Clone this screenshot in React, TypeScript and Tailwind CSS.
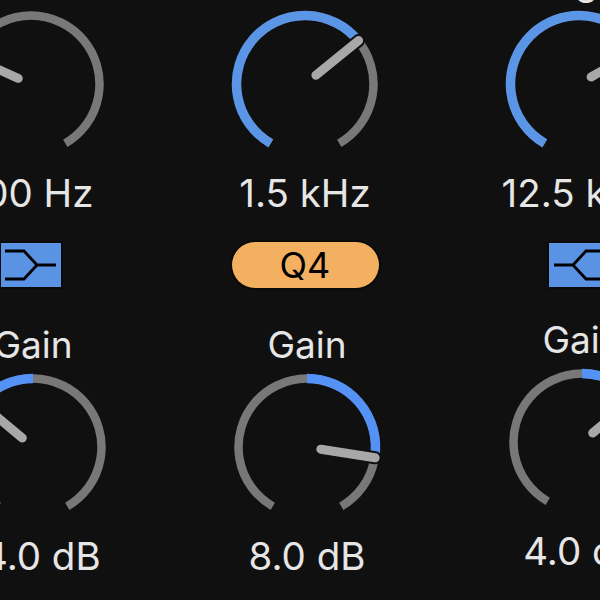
const START = -150;
const END = 150;

function polar(cx: number, cy: number, r: number, deg: number) {
  const rad = (deg * Math.PI) / 180;
  return [cx + r * Math.sin(rad), cy - r * Math.cos(rad)];
}

function arc(r: number, from: number, to: number) {
  const [x1, y1] = polar(80, 80, r, from);
  const [x2, y2] = polar(80, 80, r, to);
  const large = to - from > 180 ? 1 : 0;
  return `M ${x1} ${y1} A ${r} ${r} 0 ${large} 1 ${x2} ${y2}`;
}

interface KnobProps {
  angle: number;
  origin?: number;
  blue: string;
}

// origin: where the blue part of the ring begins (bipolar gain knobs start at 12 o'clock)
function Knob({ angle, origin = START, blue }: KnobProps) {
  const [nx1, ny1] = polar(80, 80, 14, angle);
  const [nx2, ny2] = polar(80, 80, 69, angle);
  const from = Math.min(origin, angle);
  const to = Math.max(origin, angle);
  return (
    <svg width="160" height="160" viewBox="0 0 160 160" fill="none" className="block shrink-0">
      <path d={arc(68.5, START, END)} stroke="#787878" strokeWidth="8.5" />
      <path d={arc(68.5, from, to)} stroke={blue} strokeWidth="9.5" />
      <line x1={nx1} y1={ny1} x2={nx2} y2={ny2} stroke="#101010" strokeWidth="13" strokeLinecap="round" />
      <line x1={nx1} y1={ny1} x2={nx2} y2={ny2} stroke="#a8a8a8" strokeWidth="9" strokeLinecap="round" />
    </svg>
  );
}

function RouteButton({ flip }: { flip?: boolean }) {
  return (
    <div className="flex h-[48px] w-[64px] items-center justify-center bg-[#0a0a0a]">
      <svg width="60" height="44" viewBox="0 0 60 44" fill="none" className={flip ? "block -scale-x-100" : "block"}>
        <rect width="60" height="44" fill="#5a92e4" />
        <path d="M4 8 H23 L36 22 H55 M4 36 H23 L36 22" stroke="#000" strokeWidth="2.8" />
      </svg>
    </div>
  );
}

const valueText = "text-[38.5px] leading-[40px] font-[420] text-[#e6e6e6] whitespace-nowrap text-center";
const labelText = "text-[37px] leading-[40px] font-[420] text-[#e6e6e6] whitespace-nowrap text-center";

export default function App() {
  return (
    <div
      className="h-[600px] w-[600px] overflow-hidden bg-[#101010]"
      style={{ fontFamily: '"Inter", "Liberation Sans", sans-serif' }}
    >
      <div className="-ml-[106px] flex w-[822px]">
        {/* low band */}
        <div className="flex w-[274px] flex-col items-center">
          <div className="h-[4px]" />
          <Knob angle={-66} blue="#5b95e5" />
          <div className={`${valueText} mt-[9px] h-[40px]`}>100 Hz</div>
          <div className="mt-[28px]">
            <RouteButton />
          </div>
          <div className="ml-[4px] flex flex-col items-center">
            <div className={`${labelText} mt-[36px]`}>Gain</div>
            <div className="mt-[2px]">
              <Knob angle={-50} origin={0} blue="#5592f5" />
            </div>
            <div className={`${valueText} mt-[9px]`}>-4.0 dB</div>
          </div>
        </div>

        {/* mid band */}
        <div className="flex w-[274px] flex-col items-center">
          <div className="h-[4px]" />
          <Knob angle={51} blue="#5b95e5" />
          <div className={`${valueText} mt-[9px] h-[40px]`}>1.5 kHz</div>
          <div className="mt-[28px] flex h-[48px] items-center">
            <div className="flex h-[46px] w-[147px] items-center justify-center rounded-full bg-[#f4b061] text-[36px] font-[420] text-black shadow-[0_0_0_2px_#0a0a0a]">
              Q4
            </div>
          </div>
          <div className="ml-[4px] flex flex-col items-center">
            <div className={`${labelText} mt-[36px]`}>Gain</div>
            <div className="mt-[2px]">
              <Knob angle={99} origin={0} blue="#5592f5" />
            </div>
            <div className={`${valueText} mt-[9px]`}>8.0 dB</div>
          </div>
        </div>

        {/* high band */}
        <div className="flex w-[274px] flex-col items-center">
          <div className={`${labelText} mt-[-38px] mb-[2px] h-[40px]`}>High</div>
          <Knob angle={60} blue="#5b95e5" />
          <div className={`${valueText} mt-[9px] h-[40px]`}>12.5 kHz</div>
          <div className="mt-[28px]">
            <RouteButton flip />
          </div>
          <div className="ml-[6px] flex flex-col items-center">
            <div className={`${labelText} mt-[31px]`}>Gain</div>
            <div className="mt-[2px]">
              <Knob angle={50} origin={0} blue="#5592f5" />
            </div>
            <div className={`${valueText} mt-[9px]`}>4.0 dB</div>
          </div>
        </div>
      </div>
    </div>
  );
}
